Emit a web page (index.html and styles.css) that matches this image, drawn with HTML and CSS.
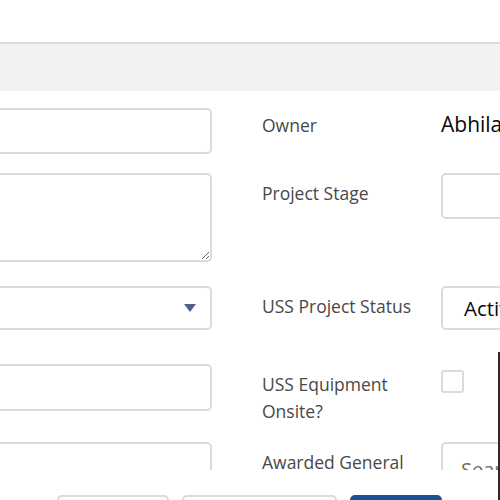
FILE: index.html
```html
<!DOCTYPE html>
<html>
<head>
<meta charset="utf-8">
<link rel="stylesheet" href="styles.css">
</head>
<body>
<div class="modal">
  <div class="top"></div>
  <div class="band"></div>
  <div class="body">
    <div class="form">
      <div class="row r1">
        <div class="ctl"><div class="input"></div></div>
        <div class="lbl">Owner</div>
        <div class="ctl2"><div class="value">Abhilash</div></div>
      </div>
      <div class="row r2">
        <div class="ctl"><textarea class="area"></textarea></div>
        <div class="lbl">Project Stage</div>
        <div class="ctl2"><div class="input"></div></div>
      </div>
      <div class="row r3">
        <div class="ctl">
          <div class="input select">
            <svg class="caret" width="12" height="8" viewBox="0 0 12 8"><path d="M0 0H12L6 8Z" fill="#4f6185"/></svg>
          </div>
        </div>
        <div class="lbl">USS Project Status</div>
        <div class="ctl2"><div class="input select2"><span class="txt">Active</span></div></div>
      </div>
      <div class="row r4">
        <div class="ctl"><div class="input tall"></div></div>
        <div class="lbl">USS Equipment Onsite?</div>
        <div class="ctl2"><div class="check"></div></div>
      </div>
      <div class="row r5">
        <div class="ctl"><div class="input"></div></div>
        <div class="lbl">Awarded General Contractor</div>
        <div class="ctl2"><div class="input"><span class="ph">Search</span></div></div>
      </div>
    </div>
  </div>
  <div class="footer">
    <button class="btn b1">Cancel</button>
    <button class="btn b2">Save &amp; New</button>
    <button class="btn b3">Save</button>
  </div>
  <div class="edge"></div>
</div>
</body>
</html>
```

FILE: styles.css
```css
html, body {
  margin: 0;
  padding: 0;
  background: #ffffff;
}
body {
  width: 500px;
  height: 500px;
  overflow: hidden;
  font-family: "Open Sans", "Liberation Sans", sans-serif;
}
.modal {
  position: relative;
  width: 500px;
  height: 500px;
  overflow: hidden;
  background: #fff;
}
.top {
  height: 42px;
  border-bottom: 2px solid #dddbda;
  background: #fff;
}
.band {
  height: 47px;
  background: #f3f2f2;
}
.body {
  height: 379px;
  overflow: hidden;
  padding-top: 17px;
  box-sizing: border-box;
}
.form {
  margin-left: -70px;
}
.row {
  display: grid;
  grid-template-columns: 282px 229px 300px;
  align-items: start;
}
.r1 { height: 65px; }
.r2 { height: 113px; }
.r3 { height: 78px; }
.r4 { height: 78px; }
.r5 { height: 78px; }
.lbl {
  padding-left: 50px;
  padding-top: 7px;
  padding-right: 4px;
  font-size: 17.5px;
  line-height: 27px;
  color: #484848;
}
.r1 .lbl { padding-top: 4px; }
.input {
  height: 46px;
  box-sizing: border-box;
  border: 2px solid #dddbda;
  border-radius: 5px;
  background: #fff;
  display: flex;
  align-items: center;
}
.input.tall { height: 47px; }
.area {
  display: block;
  width: 100%;
  height: 89px;
  box-sizing: border-box;
  border: 2px solid #dddbda;
  border-radius: 5px;
  resize: vertical;
  margin: 0;
  padding: 0;
  background: #fff;
}
.select {
  height: 44px;
  justify-content: flex-end;
  padding-right: 14px;
}
.caret { display: block; }
.select2 {
  height: 44px;
  padding-left: 21px;
}
.txt {
  font-size: 20.5px;
  color: #080707;
}
.ph {
  font-size: 20px;
  color: #706e6b;
  padding-left: 18px;
  white-space: nowrap;
  margin-top: 8px;
}
.value {
  font-size: 21px;
  color: #080707;
  padding-top: 2px;
  white-space: nowrap;
}
.check {
  margin-top: 6px;
  width: 23px;
  height: 23px;
  box-sizing: border-box;
  border: 2px solid #dddbda;
  border-radius: 3px;
}
.footer {
  height: 30px;
  display: flex;
  gap: 13px;
  padding-top: 25px;
  padding-left: 57px;
  box-sizing: border-box;
}
.btn {
  height: 44px;
  border: 2px solid #dddbda;
  border-radius: 5px;
  background: #fff;
  font-family: "Open Sans", sans-serif;
  font-size: 17px;
  color: #0b5cab;
  flex: none;
  padding-top: 12px;
}
.b1 { width: 112px; }
.b2 { width: 155px; }
.b3 { width: 92px; background: #1b5297; border-color: #1b5297; color: #fff; }
.edge {
  position: absolute;
  right: 0;
  top: 352px;
  bottom: 0;
  width: 2px;
  background: #2a2a2a;
}
```
